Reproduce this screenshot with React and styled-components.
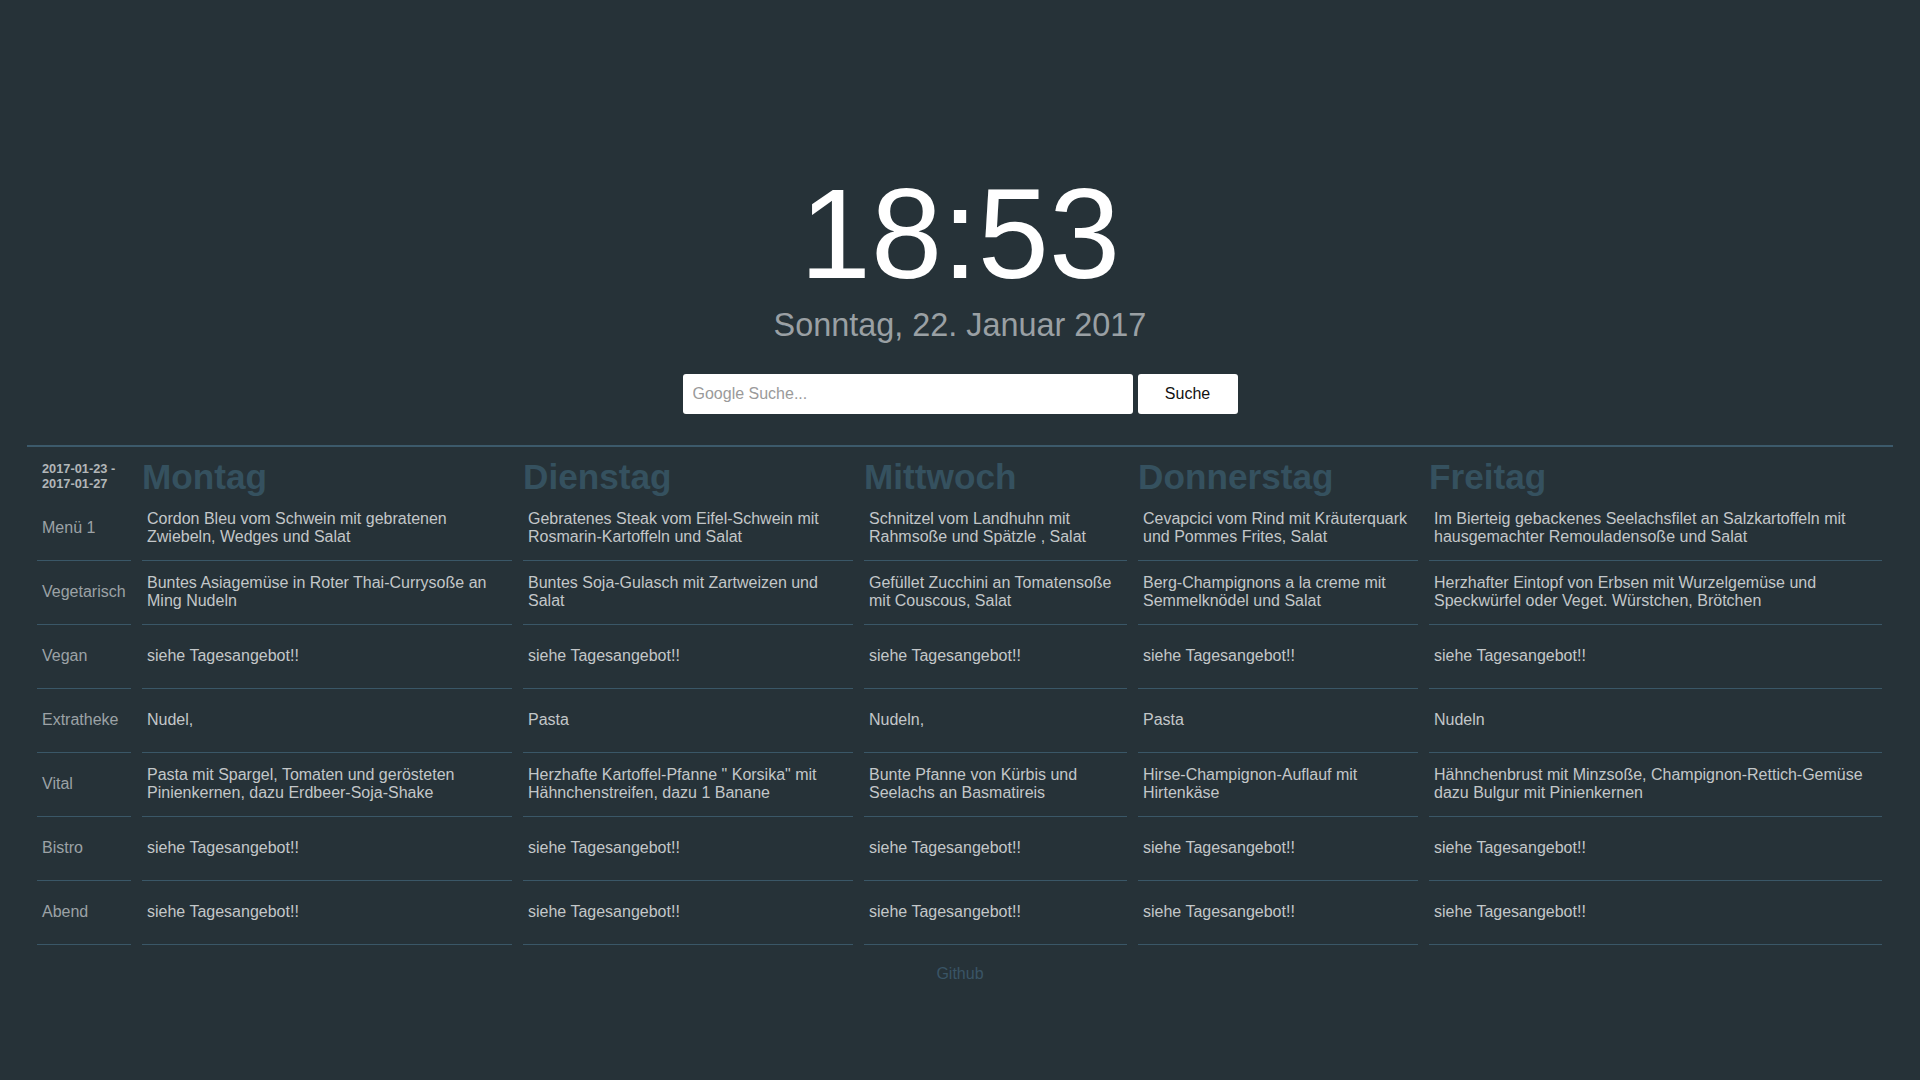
import React from "react";
import styled, { createGlobalStyle } from "styled-components";

const GlobalStyle = createGlobalStyle`
  html, body {
    margin: 0;
    padding: 0;
    background: #263238;
    font-family: "Liberation Sans", Arial, sans-serif;
  }
  * { box-sizing: border-box; }
`;

const Page = styled.div`
  min-height: 1080px;
  padding: 170px 27px 0;
  display: flex;
  flex-direction: column;
  align-items: stretch;
`;

const Clock = styled.div`
  font-size: 128px;
  line-height: 1;
  color: #ffffff;
  text-align: center;
  height: 128px;
`;

const DateLine = styled.div`
  margin-top: 11px;
  font-size: 32.4px;
  line-height: 1;
  height: 32px;
  color: #9aa0a4;
  text-align: center;
`;

const SearchForm = styled.form`
  margin-top: 33px;
  display: flex;
  justify-content: center;
  gap: 5px;
`;

const SearchInput = styled.input`
  width: 450px;
  height: 40px;
  border: none;
  border-radius: 3px;
  padding: 0 10px;
  background: #ffffff;
  font-family: "Liberation Sans", Arial, sans-serif;
  font-size: 16px;
  color: #222;
  outline: none;
  &::placeholder { color: #9a9a9a; }
`;

const SearchButton = styled.button`
  width: 100px;
  height: 40px;
  border: none;
  border-radius: 3px;
  background: #ffffff;
  color: #111;
  font-family: "Liberation Sans", Arial, sans-serif;
  font-size: 16px;
  padding: 0;
  cursor: pointer;
`;

const Divider = styled.hr`
  margin: 31px 0 8px;
  border: none;
  border-top: 2px solid #3c5a6b;
  height: 0;
`;

const MenuGrid = styled.div`
  display: grid;
  grid-template-columns: 94px 370px 330px 263px 280px 453px;
  grid-template-rows: 42px;
  grid-auto-rows: 64px;
  column-gap: 11px;
  padding: 0 11px 0 10px;
`;

const WeekRange = styled.div`
  display: flex;
  align-items: center;
  padding-left: 5px;
  font-size: 12.8px;
  line-height: 15px;
  font-weight: bold;
  color: #b2b6b8;
`;

const DayHeading = styled.h2`
  margin: 0;
  display: flex;
  align-items: center;
  font-size: 35.2px;
  line-height: 41px;
  font-weight: bold;
  color: #35515f;
`;

const Cell = styled.div`
  display: flex;
  align-items: center;
  padding: 0 5px 1px;
  border-bottom: 1px solid #3a5767;
  font-size: 16px;
  line-height: 18px;
  color: ${(p) => (p.$label ? "#9ca2a6" : "#c3c7c9")};
`;

const Footer = styled.footer`
  margin-top: 20px;
  text-align: center;
  font-size: 16px;
  line-height: 18.4px;
`;

const FooterLink = styled.a`
  color: #3a5566;
  text-decoration: none;
`;

const days = ["Montag", "Dienstag", "Mittwoch", "Donnerstag", "Freitag"];

const T = "siehe Tagesangebot!!";

const rows = [
  {
    label: "Menü 1",
    dishes: [
      "Cordon Bleu vom Schwein mit gebratenen Zwiebeln, Wedges und Salat",
      "Gebratenes Steak vom Eifel-Schwein mit Rosmarin-Kartoffeln und Salat",
      "Schnitzel vom Landhuhn mit Rahmsoße und Spätzle , Salat",
      "Cevapcici vom Rind mit Kräuterquark und Pommes Frites, Salat",
      "Im Bierteig gebackenes Seelachsfilet an Salzkartoffeln mit hausgemachter Remouladensoße und Salat",
    ],
  },
  {
    label: "Vegetarisch",
    dishes: [
      "Buntes Asiagemüse in Roter Thai-Currysoße an Ming Nudeln",
      "Buntes Soja-Gulasch mit Zartweizen und Salat",
      "Gefüllet Zucchini an Tomatensoße mit Couscous, Salat",
      "Berg-Champignons a la creme mit Semmelknödel und Salat",
      "Herzhafter Eintopf von Erbsen mit Wurzelgemüse und Speckwürfel oder Veget. Würstchen, Brötchen",
    ],
  },
  { label: "Vegan", dishes: [T, T, T, T, T] },
  { label: "Extratheke", dishes: ["Nudel,", "Pasta", "Nudeln,", "Pasta", "Nudeln"] },
  {
    label: "Vital",
    dishes: [
      "Pasta mit Spargel, Tomaten und gerösteten Pinienkernen, dazu Erdbeer-Soja-Shake",
      "Herzhafte Kartoffel-Pfanne \" Korsika\" mit Hähnchenstreifen, dazu 1 Banane",
      "Bunte Pfanne von Kürbis und Seelachs an Basmatireis",
      "Hirse-Champignon-Auflauf mit Hirtenkäse",
      "Hähnchenbrust mit Minzsoße, Champignon-Rettich-Gemüse dazu Bulgur mit Pinienkernen",
    ],
  },
  { label: "Bistro", dishes: [T, T, T, T, T] },
  { label: "Abend", dishes: [T, T, T, T, T] },
];

export default function App() {
  return (
    <>
      <GlobalStyle />
      <Page>
        <Clock>18:53</Clock>
        <DateLine>Sonntag, 22. Januar 2017</DateLine>
        <SearchForm onSubmit={(e) => e.preventDefault()}>
          <SearchInput type="text" placeholder="Google Suche..." />
          <SearchButton type="submit">Suche</SearchButton>
        </SearchForm>
        <Divider />
        <MenuGrid>
          <WeekRange>
            2017-01-23 -<br />
            2017-01-27
          </WeekRange>
          {days.map((d) => (
            <DayHeading key={d}>{d}</DayHeading>
          ))}
          {rows.map((r) => (
            <React.Fragment key={r.label}>
              <Cell $label>{r.label}</Cell>
              {r.dishes.map((dish, i) => (
                <Cell key={i}>{dish}</Cell>
              ))}
            </React.Fragment>
          ))}
        </MenuGrid>
        <Footer>
          <FooterLink href="#">Github</FooterLink>
        </Footer>
      </Page>
    </>
  );
}
